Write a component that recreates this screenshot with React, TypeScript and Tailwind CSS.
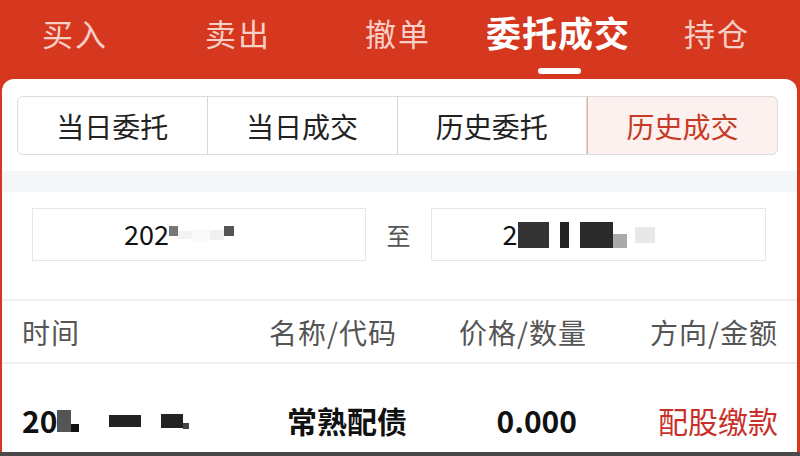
import React from "react";

const font = { fontFamily: '"Noto Sans CJK SC", "Noto Sans", sans-serif' };

function Blk({ w, h, c, dy = 0 }: { w: number; h: number; c: string; dy?: number }) {
  return (
    <span
      className="inline-block align-middle"
      style={{ width: w, height: h, background: c, marginTop: dy }}
    />
  );
}

export default function App() {
  const tabs = ["买入", "卖出", "撤单", "委托成交", "持仓"];
  const widths = ["w-[150px]", "w-[176px]", "w-[144px]", "w-[176px]", "w-[142px]"];
  const segs = ["当日委托", "当日成交", "历史委托", "历史成交"];
  return (
    <div className="w-[800px] h-[456px] overflow-hidden bg-[#d6381f] flex flex-col" style={font}>
      {/* top tabs */}
      <div className="h-[79px] flex shrink-0">
        {tabs.map((t, i) => (
          <div key={t} className={"relative flex justify-center pt-[10px] " + widths[i]}>
            {i === 3 ? (
              <span className="text-[35px] leading-[44px] font-bold text-white tracking-[1px]">{t}</span>
            ) : (
              <span className="text-[31px] leading-[44px] text-[#f6cfc6] mt-[1px] tracking-[2px]">{t}</span>
            )}
            {i === 3 && (
              <div className="absolute left-[68px] top-[68px] w-[43px] h-[6px] rounded-full bg-white" />
            )}
          </div>
        ))}
      </div>
      {/* card */}
      <div className="flex-1 ml-[2px] mr-[3px] bg-white rounded-t-[12px] flex flex-col">
        <div className="pt-[17px] pl-[15px] pr-[19px] pb-[16px]">
          <div className="flex h-[59px] border border-[#dcdcdc] rounded-[6px] overflow-hidden">
            {segs.map((s, i) => (
              <div
                key={s}
                className={
                  i === 3
                    ? "flex-1 flex items-center justify-center bg-[#fcf1ee] text-[#c83a26] text-[28px] border border-[#e4b2a8] rounded-r-[6px] -my-px -mr-px"
                    : "flex-1 flex items-center justify-center text-[#222] text-[28px] border-r border-[#d8d8d8]"
                }
              >
                {s}
              </div>
            ))}
          </div>
        </div>
        <div className="h-[21px] bg-[#f5f6f8]" />
        {/* dates */}
        <div className="h-[107px] flex items-start pt-[16px] px-[30px]">
          <div className="w-[334px] h-[53px] border border-[#e6e6e6] flex items-center justify-center text-[27px] text-[#111] pr-[40px]">
            <span>202</span>
            <Blk w={9} h={10} c="#777" dy={-8} />
            <Blk w={14} h={8} c="#f2f2f2" />
            <Blk w={18} h={12} c="#fafafa" />
            <Blk w={14} h={10} c="#f0f0f0" />
            <Blk w={10} h={10} c="#555" dy={-8} />
          </div>
          <div className="w-[65px] flex justify-center items-center h-[53px] text-[24px] text-[#555]">至</div>
          <div className="w-[335px] h-[53px] border border-[#e6e6e6] flex items-center justify-center text-[27px] text-[#111] pr-[40px]">
            <span>2</span>
            <Blk w={31} h={26} c="#333" />
            <span className="w-[11px]" />
            <Blk w={9} h={26} c="#222" />
            <span className="w-[11px]" />
            <Blk w={33} h={26} c="#2a2a2a" />
            <Blk w={14} h={14} c="#aaa" dy={12} />
            <span className="w-[8px]" />
            <Blk w={20} h={16} c="#e8e8e8" />
          </div>
        </div>
        <div className="h-[2px] bg-[#efefef]" />
        {/* header row */}
        <div className="h-[61px] flex items-center pl-[20px] pr-[19px] text-[28px] text-[#555] tracking-[1px]">
          <div className="flex-1">时间</div>
          <div className="w-[190px] text-right">名称/代码</div>
          <div className="w-[190px] text-right">价格/数量</div>
          <div className="w-[191px] text-right">方向/金额</div>
        </div>
        <div className="h-[2px] bg-[#f0f0f0]" />
        {/* data row */}
        <div className="flex-1 flex items-start pt-[34px] pl-[20px] pr-[19px] text-[30px] font-bold text-[#111]">
          <div className="flex-1 flex items-center">
            <span>20</span>
            <Blk w={14} h={22} c="#555" />
            <Blk w={8} h={8} c="#111" dy={14} />
            <span className="w-[30px]" />
            <Blk w={32} h={12} c="#222" />
            <span className="w-[20px]" />
            <Blk w={22} h={14} c="#222" />
            <Blk w={6} h={6} c="#444" dy={10} />
          </div>
          <div className="w-[180px] text-right">常熟配债</div>
          <div className="w-[170px] text-right font-semibold">0.000</div>
          <div className="w-[201px] text-right text-[#c9302a] font-normal">配股缴款</div>
        </div>
      </div>
      <div className="h-[4px] bg-[#4a4a4a] shrink-0" />
    </div>
  );
}
